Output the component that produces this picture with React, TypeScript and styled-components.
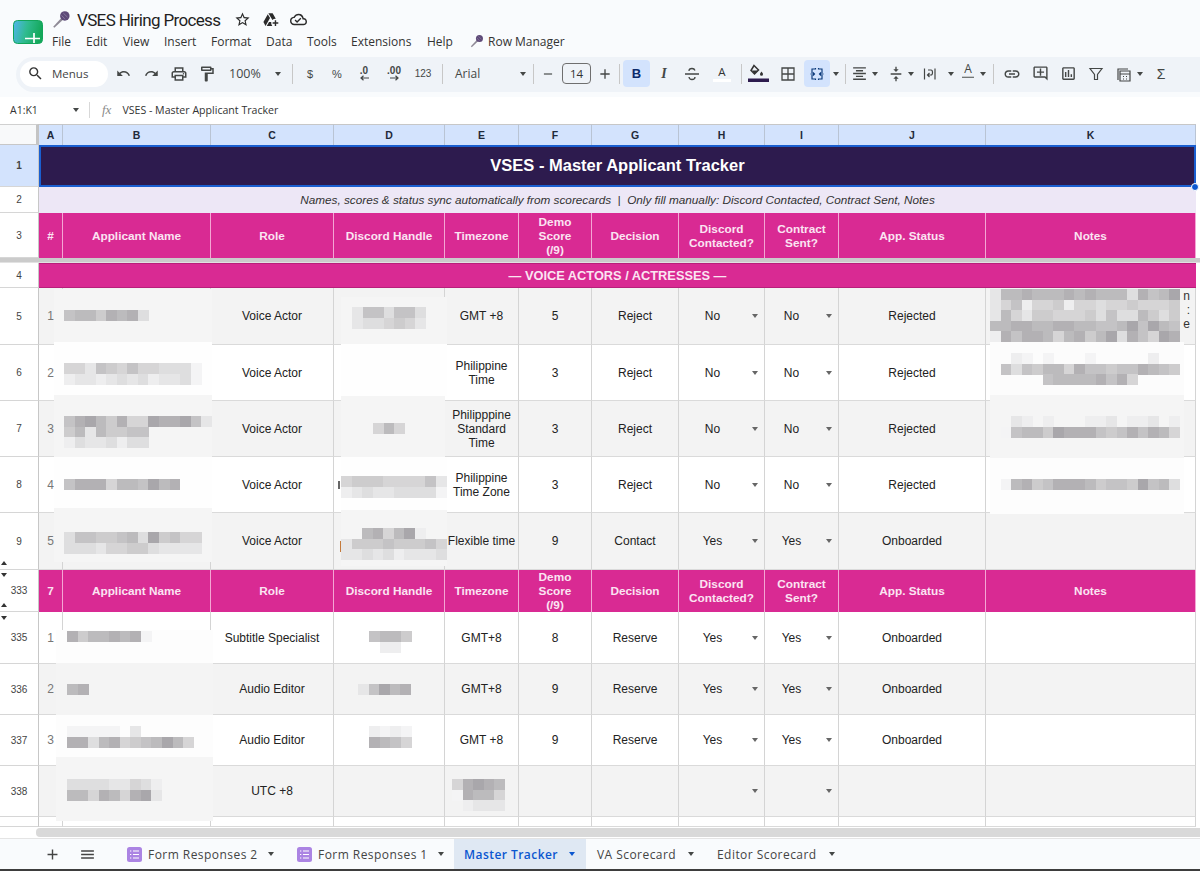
import React from "react";
import styled, { createGlobalStyle } from "styled-components";
import {
  MdUndo, MdRedo, MdOutlineLocalPrintshop, MdOutlineFormatPaint, MdSearch, MdStarBorder,
  MdOutlineAddToDrive, MdOutlineCloudDone, MdFormatAlignCenter, MdVerticalAlignCenter,
  MdLink, MdOutlineAddComment, MdOutlineInsertChart, MdAdd, MdRemove, MdMenu,
} from "react-icons/md";

const GlobalStyle = createGlobalStyle`
  html, body { margin: 0; padding: 0; background: #f9fbfd; overflow: hidden; }
  body { font-family: "Liberation Sans", Arial, sans-serif; }
  #root { width: 1200px; height: 871px; overflow: hidden; }
`;

const ICON = "#444746";
const COLS = "39px 24px 148px 123px 111px 74px 73px 87px 86px 74px 147px 210px 4px";

const Page = styled.div`
  width: 1200px; height: 871px; display: flex; flex-direction: column; background: #f9fbfd; overflow: hidden;
`;
const TopBar = styled.header`
  height: 57px; flex: none; display: flex; padding-left: 13px; box-sizing: border-box;
`;
const LogoWrap = styled.div`
  width: 39px; flex: none; padding-top: 20px;
`;
const TitleColumn = styled.div`
  display: flex; flex-direction: column;
`;
const TitleRow = styled.div`
  height: 23px; margin-top: 8px; display: flex; align-items: center; color: #1f1f1f;
`;
const DocTitle = styled.span`
  font-family: Roboto, sans-serif; font-size: 17px; letter-spacing: -0.65px; color: #1f1f1f; margin-left: 6px; margin-right: 14px; white-space: nowrap;
`;
const TitleIcon = styled.span`
  display: inline-flex; width: 18px; margin-right: 10px; color: #2b2b2b;
`;
const MenuRow = styled.nav`
  height: 20px; display: flex; align-items: center; font-family: "Open Sans", sans-serif; font-size: 12px; color: #333;
`;
const MenuItem = styled.span<{ $w: number }>`
  width: ${p => p.$w}px; flex: none; white-space: nowrap; display: inline-flex; align-items: center; gap: 4px;
`;

const Toolbar = styled.div`
  height: 35px; flex: none; margin-left: 16px; width: 1184px; background: #eff3f8;
  border-radius: 18px 0 0 18px; display: flex; align-items: center; padding: 0 0 2px 4px; box-sizing: border-box;
`;
const SearchPill = styled.div`
  width: 88px; height: 26px; flex: none; background: #fff; border-radius: 13px; display: flex; align-items: center;
  padding-left: 7px; gap: 8px; box-sizing: border-box; font-family: "Open Sans", sans-serif; font-size: 11.5px; color: #444; margin-right: 1px;
`;
const Tool = styled.div<{ $w?: number; $on?: boolean; $start?: boolean; $ml?: number }>`
  width: ${p => p.$w ?? 28}px; height: 27px; flex: none; display: flex; align-items: center;
  justify-content: ${p => (p.$start ? "flex-start" : "center")};
  margin-left: ${p => p.$ml ?? 0}px;
  background: ${p => (p.$on ? "#d3e3fd" : "transparent")}; border-radius: 4px;
  color: ${p => (p.$on ? "#0b2a6b" : ICON)}; font-size: 11px; box-sizing: border-box; white-space: nowrap;
`;
const ToolIconSlot = styled.span<{ $ml: number }>`
  margin-left: ${p => p.$ml}px; display: inline-flex;
`;
const ToolText = styled.span<{ $size?: number; $font?: string; $w?: number; $pl?: number; $weight?: number; $italic?: boolean; $color?: string }>`
  font-family: ${p => p.$font ?? `"Open Sans", sans-serif`}; font-size: ${p => p.$size ?? 11}px; color: ${p => p.$color ?? "#444746"};
  width: ${p => (p.$w ? `${p.$w}px` : "auto")}; padding-left: ${p => p.$pl ?? 0}px;
  font-weight: ${p => p.$weight ?? 400}; font-style: ${p => (p.$italic ? "italic" : "normal")};
`;
const Sep = styled.div<{ $w?: number }>`
  width: ${p => p.$w ?? 8}px; height: 20px; flex: none; position: relative;
  &::after { content: ""; position: absolute; left: 50%; top: 0; bottom: 0; width: 1px; background: #c7c7c7; }
`;
const FontSizeBox = styled.div`
  width: 29px; height: 21px; flex: none; margin: 0 3px; border: 1px solid #6f6f6f; border-radius: 4px; box-sizing: border-box;
  display: flex; align-items: center; justify-content: center; font-size: 11.5px; color: #333; font-family: "Open Sans", sans-serif;
`;
const Caret = styled.i<{ $ml?: number; $c?: string }>`
  display: inline-block; flex: none; width: 0; height: 0; margin-left: ${p => p.$ml ?? 0}px;
  border-left: 3.5px solid transparent; border-right: 3.5px solid transparent; border-top: 4px solid ${p => p.$c ?? "#444746"};
`;
const DecimalIcon = styled.span`
  display: inline-flex; flex-direction: column; align-items: center; line-height: 9px; font-size: 10px; font-weight: 700; color: #444746;
`;
const TextColor = styled.span`
  display: inline-flex; flex-direction: column; align-items: center; font-size: 11.5px; line-height: 13px; color: #333; font-family: "Open Sans", sans-serif;
  &::after { content: ""; width: 18px; height: 3px; background: #fff; margin-top: 1px; }
`;
const RotateA = styled.span`
  margin-left: 4px; display: inline-flex; flex-direction: column; align-items: center; font-size: 12px; line-height: 12px; font-family: "Open Sans", sans-serif; color: #444746; padding-top: 3px;
`;
const SigmaGlyph = styled.span`
  font-size: 14px; color: #444746;
`;

const FormulaBar = styled.div`
  height: 27px; flex: none; margin-top: 5px; padding-bottom: 1px; background: #fff; display: flex; align-items: center; box-sizing: border-box;
  font-family: "Open Sans", sans-serif; font-size: 10.6px; color: #333;
`;
const NameBox = styled.div`
  width: 90px; flex: none; padding-left: 10px; box-sizing: border-box; display: flex; align-items: center; border-right: 1px solid #d8d8d8; height: 16px;
`;
const NameText = styled.span`
  width: 63px; font-size: 10.5px;
`;
const Fx = styled.span`
  font-family: "Liberation Serif", serif; font-style: italic; font-size: 13px; color: #8a8a8a; margin: 0 11px 0 12px;
`;

const Sheet = styled.div`
  position: relative; flex: none; height: 703px; overflow: hidden; background: #fff;
`;
const Row = styled.div<{ $h: number }>`
  display: grid; grid-template-columns: ${COLS}; height: ${p => p.$h}px; box-sizing: border-box;
`;
const Corner = styled.div`
  background: #f8f9fa; border-right: 3px solid #c4c4c4; border-bottom: 1px solid #c7c7c7; border-top: 1px solid #d0d0d0; box-sizing: border-box;
`;
const ColHead = styled.div`
  background: #d3e3fd; border-right: 1px solid #b9c4d4; border-top: 1px solid #c7c7c7; display: flex; align-items: center; justify-content: center;
  font-size: 10.5px; font-weight: 700; color: #1f2a3a; box-sizing: border-box;
`;
const RowHead = styled.div<{ $on?: boolean }>`
  position: relative; background: ${p => (p.$on ? "#d3e3fd" : "#fff")}; border-right: 1px solid #c7c7c7; border-bottom: 1px solid #d6d6d6;
  display: flex; align-items: center; justify-content: center; font-size: 10px; color: #444; font-weight: ${p => (p.$on ? 700 : 400)}; box-sizing: border-box;
`;
const Fold = styled.i<{ $up?: boolean; $top?: number; $bottom?: number }>`
  position: absolute; left: 1px; width: 0; height: 0;
  ${p => (p.$top !== undefined ? `top: ${p.$top}px;` : "")}
  ${p => (p.$bottom !== undefined ? `bottom: ${p.$bottom}px;` : "")}
  border-left: 3px solid transparent; border-right: 3px solid transparent;
  ${p => (p.$up ? "border-bottom: 4px solid #333;" : "border-top: 4px solid #333;")}
`;
const TitleBand = styled.div`
  grid-column: 2 / 13; background: #2d1b4e; color: #fff; font-weight: 700; font-size: 16.5px; display: flex; align-items: center; justify-content: center;
  border: 2px solid #1a5fd0; padding-bottom: 2px; box-sizing: border-box;
`;
const NoteBand = styled.div`
  grid-column: 2 / 13; background: #ede7f6; color: #333; font-style: italic; font-size: 11.75px; display: flex; align-items: center; justify-content: center; white-space: pre;
  padding-bottom: 2px; box-sizing: border-box;
`;
const SectionBand = styled.div`
  grid-column: 2 / 13; background: #d92a93; color: #fbe4f2; font-weight: 700; font-size: 12.8px; display: flex; align-items: center; justify-content: center;
  border-top: 1px solid #b81f7b; border-bottom: 1px solid #b81f7b; box-sizing: border-box;
`;
const HeadCell = styled.div`
  background: #d92a93; color: #fbe4f2; font-weight: 700; font-size: 11.8px; line-height: 14px; text-align: center; display: flex; align-items: center; justify-content: center;
  border-right: 1px solid #f4a6d4; box-sizing: border-box; padding: 0 2px;
`;
const Cell = styled.div<{ $alt?: boolean; $pr?: number; $muted?: boolean; $end?: boolean }>`
  position: relative; background: ${p => (p.$alt ? "#f3f3f3" : "#fff")}; border-right: 1px solid #d4d4d4; border-bottom: 1px solid #dadada;
  display: flex; align-items: center; justify-content: ${p => (p.$end ? "flex-end" : "center")}; text-align: ${p => (p.$end ? "right" : "center")}; font-size: 12px; line-height: 14px;
  color: ${p => (p.$muted ? "#777" : "#222")}; box-sizing: border-box; padding-right: ${p => p.$pr ?? 0}px;
`;
const NoteTail = styled.span`
  margin-bottom: 12px; color: #333;
`;
const CellCaret = styled.i`
  position: absolute; right: 6px; top: 50%; margin-top: -2px; width: 0; height: 0;
  border-left: 3.5px solid transparent; border-right: 3.5px solid transparent; border-top: 4px solid #666;
`;
const Gutter = styled.div`
  background: #fff;
`;
const FreezeBar = styled.div`
  height: 5px; background: #cbcbcb; border-bottom: 1px solid #e2e2e2; box-sizing: border-box;
`;
const Handle = styled.i`
  position: absolute; left: 1191px; top: 59px; width: 8px; height: 8px; border-radius: 50%; background: #0b57d0; border: 1px solid #fff; box-sizing: border-box;
`;
const Blur = styled.svg`
  position: absolute; left: 0; top: 0; pointer-events: none;
`;

const ScrollArea = styled.div`
  height: 12px; flex: none; background: #fff; border-top: 1px solid #cfcfcf; box-sizing: border-box; padding: 1px 0 1px 36px; margin-top: -1px;
`;
const ScrollThumb = styled.div`
  height: 9px; background: #d9d9d9; border-radius: 4px 0 0 4px;
`;
const TabBar = styled.footer`
  flex: 1; min-height: 0; display: flex; align-items: stretch; background: #f9fbfd; border-top: 1px solid #e4e4e4; border-bottom: 2px solid #3d3d3d;
  box-sizing: border-box; font-family: "Open Sans", sans-serif; font-size: 12px; letter-spacing: 0.45px; color: #444;
`;
const TabSpacer = styled.div`
  width: 35px; flex: none;
`;
const TabTool = styled.div<{ $w: number }>`
  width: ${p => p.$w}px; flex: none; display: flex; align-items: center; justify-content: center; color: #444;
`;
const Tab = styled.div<{ $w: number; $on?: boolean; $pl?: number }>`
  width: ${p => p.$w}px; flex: none; display: flex; align-items: center; gap: 6px; box-sizing: border-box; padding-left: ${p => p.$pl ?? 10}px; white-space: nowrap;
  background: ${p => (p.$on ? "#dfe8f3" : "transparent")}; color: ${p => (p.$on ? "#0b57d0" : "#444")}; font-weight: ${p => (p.$on ? 600 : 400)};
`;
const TabLabel = styled.span<{ $w: number }>`
  width: ${p => p.$w}px; flex: none;
`;

const Mic = ({ s = 16 }: { s?: number }) => (
  <svg width={s} height={s} viewBox="0 0 16 16" style={{ flex: "none" }}>
    <path d="M2 15 L1 14 L8 6.5 L9.5 8 Z" fill="#8f8a96" />
    <circle cx="10.8" cy="5" r="4" fill="#5e4a78" />
    <path d="M8 4.5 L11 7.8 M9.5 2.6 L13 6 " stroke="#8e7fa3" strokeWidth="0.7" />
  </svg>
);
const Logo = () => (
  <svg width="30" height="24" viewBox="0 0 30 24">
    <defs>
      <linearGradient id="lg" x1="0" x2="1" y1="0" y2="0.2">
        <stop offset="0" stopColor="#52b4ee" />
        <stop offset="0.5" stopColor="#30bb90" />
        <stop offset="1" stopColor="#14a85a" />
      </linearGradient>
    </defs>
    <rect x="0.5" y="0.5" width="29" height="23" rx="4" fill="url(#lg)" stroke="#12a55a" />
    <path d="M12 18.5 H27 M21 13 V23" stroke="#fff" strokeWidth="1.7" fill="none" />
  </svg>
);
const Arrow = ({ left }: { left?: boolean }) => (
  <svg width="11" height="6" viewBox="0 0 11 6">
    <path d={left ? "M10 3 H2 M4.5 .8 L2 3 L4.5 5.2" : "M1 3 H9 M6.5 .8 L9 3 L6.5 5.2"} stroke="#444746" strokeWidth="1.2" fill="none" />
  </svg>
);
const Stroke = ({ d, c = ICON, w = 1.3, s = 16 }: { d: string; c?: string; w?: number; s?: number }) => (
  <svg width={s} height={s} viewBox="0 0 16 16" fill="none" stroke={c} strokeWidth={w}><path d={d} /></svg>
);
const FillIcon = () => (
  <svg width="21" height="21" viewBox="0 0 21 21">
    <path d="M6 2.5 L10.5 7 L6.5 11 L3 7.5 Z" fill="none" stroke="#333" strokeWidth="1.5" />
    <path d="M4 7.5 H10 L6.5 11 Z" fill="#333" />
    <path d="M13.5 8.5 c1 1.4 1.5 2 1.5 2.8 a1.5 1.5 0 0 1-3 0 c0-.8.5-1.4 1.5-2.8 z" fill="#333" />
    <rect x="0" y="15.5" width="21" height="3.5" fill="#2d1b4e" />
  </svg>
);
const FormIcon = () => (
  <svg width="15" height="15" viewBox="0 0 15 15" style={{ flex: "none" }}>
    <rect width="15" height="15" rx="2.5" fill="#ab84e3" />
    <path d="M3 4 h1.3 M3 7.5 h1.3 M3 11 h1.3 M6 4 h6 M6 7.5 h6 M6 11 h6" stroke="#fff" strokeWidth="1.2" />
  </svg>
);

const GRAYS: Record<string, string> = {
  "0": "#a9a7ab", "1": "#b3b1b4", "2": "#bcbbbd", "3": "#c4c3c5", "4": "#cdcccd",
  "5": "#d6d5d6", "6": "#dededf", "7": "#e6e6e7", "8": "#eeeeef", "9": "#f4f4f5",
};
const B = 10.55;
type M = [number, number, string[]];
const MOSAICS: M[] = [
  [64, 310, ["32241216"]],
  [64, 363, ["5573453556669", "8778767687769"]],
  [64, 416, ["31024155011037", "42724433", "86776866"]],
  [64, 479, ["31115223021"]],
  [64, 532, ["6334432604355", "6667554467777"]],
  [352, 307, ["7336336", "7665457"]],
  [373, 423, ["525"]],
  [341, 476, ["5444555537", "8767766669"]],
  [341, 528, ["..215208..", "7444344435", "7767687776"]],
  [990, 289, ["722122212122261320", "753855485565545554", "725744555463662464", "221122112233203023", "813112521420613501"]],
  [990, 353, ["..89.9...9.....8..", ".36342251334331234", ".....322221315...."]],
  [990, 416, ["..78.8...887.887.8", ".93224011134313125"]],
  [990, 479, [".92143111243340326"]],
  [67, 631, ["14221219"]],
  [369, 631, ["3224", ".88."]],
  [67, 684, ["21"]],
  [358, 684, ["73021"]],
  [67, 726, ["99999.7", "116215432025"]],
  [369, 726, ["8989", "1235"]],
  [67, 779, ["666677568", "225125107"]],
  [452, 779, ["51012", "91225", ".8777"]],
];
const HALOS: [number, number, number, number, string][] = [
  [54, 289, 158, 53, "#f5f5f5"], [54, 342, 158, 53, "#fefefe"], [54, 395, 158, 62, "#f5f5f5"],
  [54, 457, 158, 51, "#fefefe"], [54, 508, 158, 54, "#f5f5f5"],
  [56, 630, 157, 33, "#fdfdfd"], [56, 663, 157, 52, "#f4f4f4"], [56, 715, 157, 42, "#fdfdfd"], [56, 757, 157, 64, "#f5f5f5"],
  [341, 297, 106, 47, "#f5f5f5"], [341, 344, 106, 52, "#fefefe"], [341, 396, 104, 61, "#f5f5f5"],
  [341, 457, 106, 53, "#fefefe"], [341, 510, 106, 56, "#f5f5f5"],
  [990, 342, 194, 53, "#fcfcfc"], [990, 395, 194, 63, "#f5f5f5"], [990, 458, 194, 56, "#fdfdfd"],
];

const Mosaic = () => (
  <Blur width="1200" height="703" viewBox="0 124 1200 703" shapeRendering="crispEdges">
    {HALOS.map(([x, y, w, h, f], i) => <rect key={i} x={x} y={y} width={w} height={h} fill={f} />)}
    {MOSAICS.flatMap(([x, y, rows], mi) =>
      rows.flatMap((r, ri) =>
        r.split("").map((c, ci) =>
          c === "." ? null : (
            <rect key={`${mi}-${ri}-${ci}`} x={x + ci * B} y={y + ri * B} width={B + 0.4} height={B + 0.4} fill={GRAYS[c]} />
          )
        )
      )
    )}
    <rect x="338" y="481" width="1.5" height="8" fill="#666" />
    <rect x="340" y="541" width="1" height="11" fill="#c47a3c" />
  </Blur>
);

const LETTERS = ["A", "B", "C", "D", "E", "F", "G", "H", "I", "J", "K"];
const Header = ({ first }: { first: string }) => (
  <>
    <HeadCell>{first}</HeadCell>
    <HeadCell>Applicant Name</HeadCell>
    <HeadCell>Role</HeadCell>
    <HeadCell>Discord Handle</HeadCell>
    <HeadCell>Timezone</HeadCell>
    <HeadCell>Demo<br />Score<br />(/9)</HeadCell>
    <HeadCell>Decision</HeadCell>
    <HeadCell>Discord<br />Contacted?</HeadCell>
    <HeadCell>Contract<br />Sent?</HeadCell>
    <HeadCell>App. Status</HeadCell>
    <HeadCell>Notes</HeadCell>
    <Gutter />
  </>
);

type D = {
  h: number; label: string; alt: boolean; n: string; role: string; tz: React.ReactNode; score: string; dec: string;
  dc: string; cs: string; status: string; folds?: React.ReactNode; note?: React.ReactNode;
};
const DATA: D[] = [
  { h: 57, label: "5", alt: true, n: "1", role: "Voice Actor", tz: "GMT +8", score: "5", dec: "Reject", dc: "No", cs: "No", status: "Rejected", note: <NoteTail>n<br />:<br />e</NoteTail> },
  { h: 56, label: "6", alt: false, n: "2", role: "Voice Actor", tz: <>Philippine<br />Time</>, score: "3", dec: "Reject", dc: "No", cs: "No", status: "Rejected" },
  { h: 56, label: "7", alt: true, n: "3", role: "Voice Actor", tz: <>Philipppine<br />Standard<br />Time</>, score: "3", dec: "Reject", dc: "No", cs: "No", status: "Rejected" },
  { h: 56, label: "8", alt: false, n: "4", role: "Voice Actor", tz: <>Philippine<br />Time Zone</>, score: "3", dec: "Reject", dc: "No", cs: "No", status: "Rejected" },
  { h: 57, label: "9", alt: true, n: "5", role: "Voice Actor", tz: "Flexible time", score: "9", dec: "Contact", dc: "Yes", cs: "Yes", status: "Onboarded", folds: <Fold $up $bottom={4} /> },
];
const DATA2: D[] = [
  { h: 52, label: "335", alt: false, n: "1", role: "Subtitle Specialist", tz: "GMT+8", score: "8", dec: "Reserve", dc: "Yes", cs: "Yes", status: "Onboarded", folds: <Fold $top={4} /> },
  { h: 51, label: "336", alt: true, n: "2", role: "Audio Editor", tz: "GMT+8", score: "9", dec: "Reserve", dc: "Yes", cs: "Yes", status: "Onboarded" },
  { h: 51, label: "337", alt: false, n: "3", role: "Audio Editor", tz: "GMT +8", score: "9", dec: "Reserve", dc: "Yes", cs: "Yes", status: "Onboarded" },
  { h: 51, label: "338", alt: true, n: "", role: "UTC +8", tz: "", score: "", dec: "", dc: "", cs: "", status: "" },
];

const DataRow = ({ d }: { d: D }) => (
  <Row $h={d.h}>
    <RowHead>{d.label}{d.folds}</RowHead>
    <Cell $alt={d.alt} $muted>{d.n}</Cell>
    <Cell $alt={d.alt} />
    <Cell $alt={d.alt}>{d.role}</Cell>
    <Cell $alt={d.alt} />
    <Cell $alt={d.alt}>{d.tz}</Cell>
    <Cell $alt={d.alt}>{d.score}</Cell>
    <Cell $alt={d.alt}>{d.dec}</Cell>
    <Cell $alt={d.alt} $pr={18}>{d.dc}<CellCaret /></Cell>
    <Cell $alt={d.alt} $pr={20}>{d.cs}<CellCaret /></Cell>
    <Cell $alt={d.alt}>{d.status}</Cell>
    <Cell $alt={d.alt} $end $pr={5}>{d.note}</Cell>
    <Gutter />
  </Row>
);

const SANS = `"Liberation Sans", sans-serif`;

export default function App() {
  return (
    <Page>
      <GlobalStyle />
      <TopBar>
        <LogoWrap><Logo /></LogoWrap>
        <TitleColumn>
          <TitleRow>
            <Mic s={19} />
            <DocTitle>VSES Hiring Process</DocTitle>
            <TitleIcon><MdStarBorder size={17} /></TitleIcon>
            <TitleIcon><MdOutlineAddToDrive size={17} /></TitleIcon>
            <TitleIcon><MdOutlineCloudDone size={17} /></TitleIcon>
          </TitleRow>
          <MenuRow>
            <MenuItem $w={34}>File</MenuItem>
            <MenuItem $w={37}>Edit</MenuItem>
            <MenuItem $w={41}>View</MenuItem>
            <MenuItem $w={47}>Insert</MenuItem>
            <MenuItem $w={55}>Format</MenuItem>
            <MenuItem $w={41}>Data</MenuItem>
            <MenuItem $w={44}>Tools</MenuItem>
            <MenuItem $w={76}>Extensions</MenuItem>
            <MenuItem $w={43}>Help</MenuItem>
            <MenuItem $w={110}><Mic s={14} />Row Manager</MenuItem>
          </MenuRow>
        </TitleColumn>
      </TopBar>

      <Toolbar>
        <SearchPill><MdSearch size={17} color="#333" />Menus</SearchPill>
        <Tool><MdUndo size={15} /></Tool>
        <Tool><MdRedo size={15} /></Tool>
        <Tool><MdOutlineLocalPrintshop size={18} /></Tool>
        <Tool><MdOutlineFormatPaint size={18} /></Tool>
        <Tool $w={66} $start><ToolText $size={12.5} $w={52} $pl={8}>100%</ToolText><Caret $ml={-6} /></Tool>
        <Sep $w={9} />
        <Tool><ToolText $font={SANS}>$</ToolText></Tool>
        <Tool $w={26}><ToolText $font={SANS}>%</ToolText></Tool>
        <Tool><DecimalIcon>.0<Arrow left /></DecimalIcon></Tool>
        <Tool $w={32}><DecimalIcon>.00<Arrow /></DecimalIcon></Tool>
        <Tool $w={26}><ToolText $font={SANS} $size={10}>123</ToolText></Tool>
        <Sep $w={11} />
        <Tool $w={82} $start><ToolText $size={12} $w={65} $pl={8}>Arial</ToolText><Caret /></Tool>
        <Sep $w={8} />
        <Tool $w={22}><MdRemove size={14} /></Tool>
        <FontSizeBox>14</FontSizeBox>
        <Tool $w={22}><MdAdd size={16} /></Tool>
        <Sep $w={5} />
        <Tool $w={27} $on $ml={2}><ToolText $font={SANS} $size={13} $weight={700} $color="#0b2a6b">B</ToolText></Tool>
        <Tool><ToolText $font={`"Liberation Serif", serif`} $size={14} $weight={700} $italic>I</ToolText></Tool>
        <Tool><Stroke d="M1 8 H15 M11 4.5 C10.5 3 9.5 2.5 8 2.5 C6 2.5 5 3.5 5 5 M5 11 C5.2 12.8 6.5 13.5 8 13.5 C9.5 13.5 11 12.8 11 11" /></Tool>
        <Tool $w={32}><TextColor>A</TextColor></Tool>
        <Sep $w={6} />
        <Tool><FillIcon /></Tool>
        <Tool $ml={2}><Stroke d="M2 2 H14 V14 H2 Z M8 2 V14 M2 8 H14" /></Tool>
        <Tool $w={26} $on $ml={2}><Stroke c="#0b3a7a" w={1.15} d="M3 7 V3 H6.5 V2 M13 7 V3 H9.5 V2 M3 9 V13 H6.5 V14 M13 9 V13 H9.5 V14 M1.5 8 H5.5 M4 6.5 L5.5 8 L4 9.5 M14.5 8 H10.5 M12 6.5 L10.5 8 L12 9.5" /></Tool>
        <Tool $w={12}><Caret /></Tool>
        <Sep $w={6} />
        <Tool $w={36} $start><ToolIconSlot $ml={3}><MdFormatAlignCenter size={17} /></ToolIconSlot><Caret $ml={4} /></Tool>
        <Tool $w={36} $start><ToolIconSlot $ml={4}><MdVerticalAlignCenter size={16} /></ToolIconSlot><Caret $ml={4} /></Tool>
        <Tool $w={38} $start><ToolIconSlot $ml={2}><Stroke d="M2.5 2.5 V13.5 M13 2.5 V13.5 M6 4 H9 C11 4 11 9 9 9 H5.5 M7.5 7 L5.5 9 L7.5 11" w={1.2} /></ToolIconSlot><Caret $ml={10} /></Tool>
        <Tool $w={32} $start><RotateA>A<Stroke s={12} d="M0 3 H16" /></RotateA><Caret $ml={6} /></Tool>
        <Sep $w={6} />
        <Tool $ml={2}><MdLink size={18} /></Tool>
        <Tool><MdOutlineAddComment size={17} /></Tool>
        <Tool><MdOutlineInsertChart size={17} /></Tool>
        <Tool><Stroke d="M2 2.5 H14 L9.5 8.5 V13.5 H6.5 V8.5 Z" w={1.2} /></Tool>
        <Tool $w={37} $start><ToolIconSlot $ml={5}><Stroke d="M3 14 V3 H13 M5 15 V5 H15 V15 Z M5 8 H15 M8 10.5 H9 M11 10.5 H12 M8 13 H9 M11 13 H12" w={1.2} /></ToolIconSlot><Caret $ml={6} /></Tool>
        <Tool><SigmaGlyph>Σ</SigmaGlyph></Tool>
      </Toolbar>

      <FormulaBar>
        <NameBox><NameText>A1:K1</NameText><Caret /></NameBox>
        <Fx>fx</Fx>
        VSES - Master Applicant Tracker
      </FormulaBar>

      <Sheet>
        <Row $h={21}>
          <Corner />
          {LETTERS.map(l => <ColHead key={l}>{l}</ColHead>)}
          <Gutter />
        </Row>
        <Row $h={42}><RowHead $on>1</RowHead><TitleBand>VSES - Master Applicant Tracker</TitleBand><Gutter /></Row>
        <Row $h={26}><RowHead>2</RowHead><NoteBand>Names, scores &amp; status sync automatically from scorecards  |  Only fill manually: Discord Contacted, Contract Sent, Notes</NoteBand><Gutter /></Row>
        <Row $h={45}><RowHead>3</RowHead><Header first="#" /></Row>
        <FreezeBar />
        <Row $h={25}><RowHead>4</RowHead><SectionBand>— VOICE ACTORS / ACTRESSES —</SectionBand><Gutter /></Row>
        {DATA.map(d => <DataRow key={d.label} d={d} />)}
        <Row $h={42}><RowHead>333<Fold $top={3} /><Fold $up $bottom={4} /></RowHead><Header first="7" /></Row>
        {DATA2.map(d => <DataRow key={d.label} d={d} />)}
        <Row $h={10}>
          <RowHead />
          {LETTERS.map(l => <Cell key={l} />)}
          <Gutter />
        </Row>
        <Mosaic />
        <Handle />
      </Sheet>

      <ScrollArea><ScrollThumb /></ScrollArea>

      <TabBar>
        <TabSpacer />
        <TabTool $w={35}><MdAdd size={17} /></TabTool>
        <TabTool $w={35}><MdMenu size={17} /></TabTool>
        <Tab $w={190} $pl={22}><FormIcon /><TabLabel $w={114}>Form Responses 2</TabLabel><Caret /></Tab>
        <Tab $w={159} $pl={2}><FormIcon /><TabLabel $w={114}>Form Responses 1</TabLabel><Caret /></Tab>
        <Tab $w={132} $on><TabLabel $w={99}>Master Tracker</TabLabel><Caret $c="#0b57d0" /></Tab>
        <Tab $w={120} $pl={11}><TabLabel $w={85}>VA Scorecard</TabLabel><Caret /></Tab>
        <Tab $w={130} $pl={11}><TabLabel $w={106}>Editor Scorecard</TabLabel><Caret /></Tab>
      </TabBar>
    </Page>
  );
}
